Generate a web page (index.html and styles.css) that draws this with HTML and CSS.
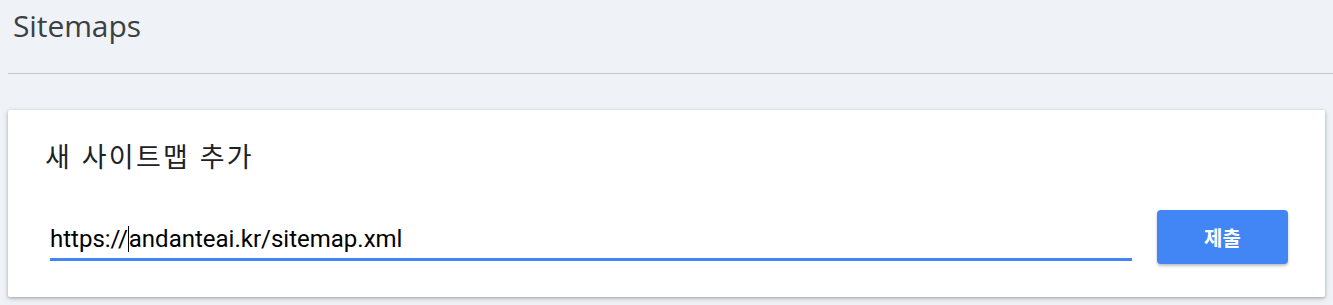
FILE: index.html
```html
<!DOCTYPE html>
<html lang="ko">
<head>
<meta charset="utf-8">
<title>Sitemaps</title>
<link rel="stylesheet" href="styles.css">
</head>
<body>
  <header class="page-header">
    <h1 class="page-title">Sitemaps</h1>
  </header>
  <main class="content">
    <section class="card">
      <h2 class="card-title">새 사이트맵 추가</h2>
      <div class="form-row">
        <div class="url-field">
          <span class="url-text">https://<span class="caret"></span>andanteai.kr/sitemap.xml</span>
        </div>
        <button class="submit-btn" type="button">제출</button>
      </div>
    </section>
  </main>
</body>
</html>
```

FILE: styles.css
```css
html, body {
  margin: 0;
  padding: 0;
  background: #eff2f7;
  height: 100%;
}
body {
  font-family: "Open Sans", "Noto Sans", "Noto Sans CJK KR", sans-serif;
  color: #3c4043;
}
.page-header {
  margin-left: 8px;
  border-bottom: 1px solid #c5c8cb;
  height: 74px;
  box-sizing: border-box;
}
.page-title {
  margin: 0;
  padding: 6px 0 0 5px;
  font-size: 30px;
  font-weight: 400;
  line-height: 40px;
  color: #3c4043;
  letter-spacing: -0.1px;
}
.content {
  padding: 36px 8px 0 8px;
}
.card {
  background: #fff;
  border-radius: 2px;
  box-shadow: 0 1px 3px rgba(60,64,67,0.35), 0 2px 6px rgba(60,64,67,0.15);
  padding: 26px 37px 33px 37px;
}
.card-title {
  margin: 0;
  font-family: "Noto Sans CJK KR", sans-serif;
  font-weight: 400;
  font-size: 27px;
  line-height: 40px;
  letter-spacing: 2.2px;
  color: #202124;
}
.form-row {
  display: flex;
  align-items: center;
  gap: 25px;
  margin-top: 34px;
  padding-left: 5px;
}
.url-field {
  flex: 1;
  border-bottom: 3px solid #4285f4;
  height: 46px;
  box-sizing: border-box;
  display: flex;
  align-items: flex-end;
  padding-bottom: 4px;
  margin-top: 1px;
}
.url-text {
  font-family: Roboto, "Liberation Sans", sans-serif;
  font-size: 24px;
  line-height: 30px;
  color: #000;
}
.caret {
  display: inline-block;
  width: 1px;
  height: 26px;
  background: #000;
  vertical-align: -5px;
}
.submit-btn {
  width: 131px;
  height: 54px;
  border: none;
  border-radius: 4px;
  background: #4285f4;
  color: #fff;
  font-family: "Noto Sans CJK KR", sans-serif;
  font-weight: 700;
  font-size: 20px;
  box-shadow: 0 2px 3px rgba(0,0,0,0.25);
  padding: 0;
}
```
